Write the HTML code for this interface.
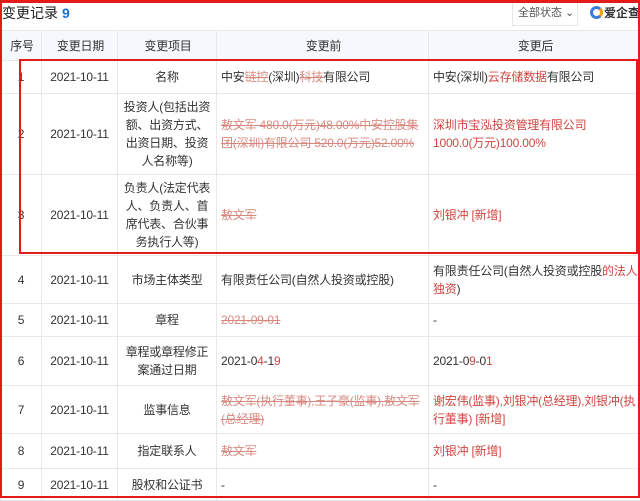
<!DOCTYPE html>
<html><head><meta charset="utf-8"><style>
*{margin:0;padding:0;box-sizing:border-box}
body{width:640px;height:498px;overflow:hidden;background:#fff;font-family:"Liberation Sans","Noto Sans CJK SC",sans-serif;color:#333;font-size:12px;position:relative}
.title{position:absolute;left:2px;top:3px;font-size:14px;color:#222}
.title b{color:#1a6fd8;margin-left:4px}
.btn{position:absolute;left:512px;top:1px;width:66px;height:25px;border:1px solid #e6e6e6;font-size:11px;color:#555;line-height:22px;padding-left:5px}
.logo{position:absolute;left:590px;top:4px;font-size:12px;color:#333;font-weight:bold;white-space:nowrap}
.logo i{display:inline-block;width:13px;height:13px;border-radius:50%;border:3px solid #3b7bdc;border-right-color:#f2a100;vertical-align:-2px;margin-right:1px}
table{position:absolute;left:0;top:30px;width:640px;border-collapse:collapse;table-layout:fixed}
td,th{border:1px solid #e8e8e8;padding:0 2px 0 4px;line-height:18px;vertical-align:middle;letter-spacing:-0.2px}
th{background:#f5f8fc;font-weight:normal;height:30px;color:#333}
td.c{text-align:center;padding:0 3px}
.r{color:#d0453f}
.s{color:#d8887f;text-decoration:line-through}
.box1{position:absolute;left:0;top:0;width:640px;height:498px;border:2px solid #e21b1b;border-top-width:3px}
.box2{position:absolute;left:19px;top:59px;width:619px;height:195px;border:2px solid #e21b1b}
</style></head><body>
<div class="title">变更记录<b>9</b></div>
<div class="btn">全部状态 ⌄</div>
<div class="logo"><i></i>爱企查</div>
<table>
<colgroup><col style="width:41px"><col style="width:76px"><col style="width:99px"><col style="width:212px"><col style="width:212px"></colgroup>
<tr><th>序号</th><th>变更日期</th><th>变更项目</th><th>变更前</th><th>变更后</th></tr>
<tr style="height:33px"><td class="c">1</td><td class="c">2021-10-11</td><td class="c">名称</td><td>中安<span class="s">链控</span>(深圳)<span class="s">科技</span>有限公司</td><td>中安(深圳)<span class="r">云存储数据</span>有限公司</td></tr>
<tr style="height:81px"><td class="c">2</td><td class="c">2021-10-11</td><td class="c">投资人(包括出资额、出资方式、出资日期、投资人名称等)</td><td><span class="s">敖文军 480.0(万元)48.00%中安控股集团(深圳)有限公司 520.0(万元)52.00%</span></td><td class="r">深圳市宝泓投资管理有限公司 1000.0(万元)100.00%</td></tr>
<tr style="height:81px"><td class="c">3</td><td class="c">2021-10-11</td><td class="c">负责人(法定代表人、负责人、首席代表、合伙事务执行人等)</td><td><span class="s">敖文军</span></td><td class="r">刘银冲 [新增]</td></tr>
<tr style="height:48px"><td class="c">4</td><td class="c">2021-10-11</td><td class="c">市场主体类型</td><td>有限责任公司(自然人投资或控股)</td><td>有限责任公司(自然人投资或控股<span class="r">的法人独资</span>)</td></tr>
<tr style="height:33px"><td class="c">5</td><td class="c">2021-10-11</td><td class="c">章程</td><td><span class="s">2021-09-01</span></td><td>-</td></tr>
<tr style="height:49px"><td class="c">6</td><td class="c">2021-10-11</td><td class="c">章程或章程修正案通过日期</td><td>2021-0<span class="r">4</span>-1<span class="r">9</span></td><td>2021-0<span class="r">9</span>-0<span class="r">1</span></td></tr>
<tr style="height:48px"><td class="c">7</td><td class="c">2021-10-11</td><td class="c">监事信息</td><td><span class="s">敖文军(执行董事),王子豪(监事),敖文军(总经理)</span></td><td class="r">谢宏伟(监事),刘银冲(总经理),刘银冲(执行董事) [新增]</td></tr>
<tr style="height:35px"><td class="c">8</td><td class="c">2021-10-11</td><td class="c">指定联系人</td><td><span class="s">敖文军</span></td><td class="r">刘银冲 [新增]</td></tr>
<tr style="height:32px"><td class="c">9</td><td class="c">2021-10-11</td><td class="c">股权和公证书</td><td>-</td><td>-</td></tr>
</table>
<div class="box1"></div>
<div class="box2"></div>
</body></html>
